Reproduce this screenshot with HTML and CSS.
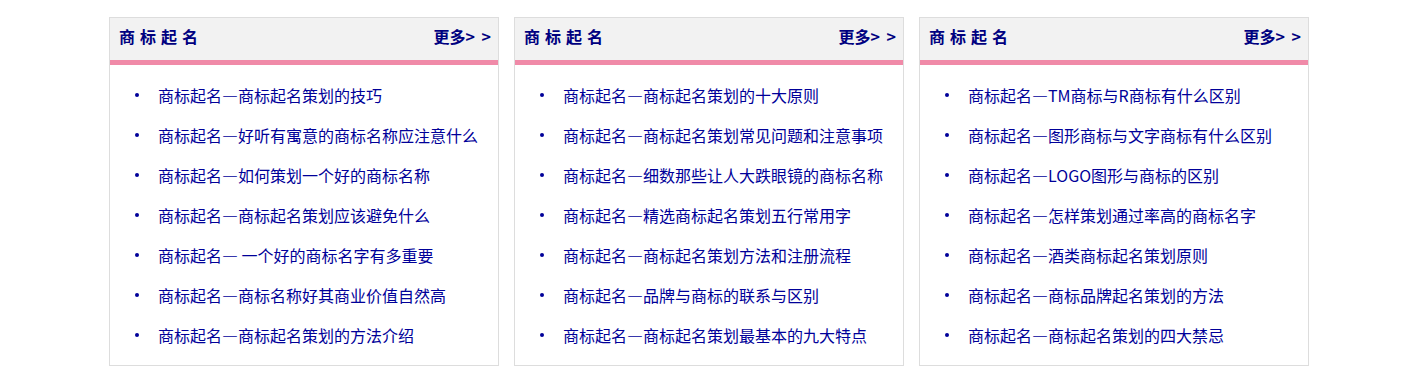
FILE: index.html
```html
<!DOCTYPE html>
<html lang="zh-CN">
  <head>
    <meta charset="UTF-8" />
    <meta name="viewport" content="width=device-width, initial-scale=1.0" />
    <title>商标起名</title>
    <link rel="stylesheet" href="styles.css">
  </head>
  <body>
    <div class="wrap">
      <div class="box">
        <div class="box-head">
          <span class="box-title">商标起名</span>
          <a class="more" href="#">更多&gt; &gt;</a>
        </div>
        <ul class="news">
          <li><a href="#">商标起名<span class="dash">—</span>商标起名策划的技巧</a></li>
          <li><a href="#">商标起名<span class="dash">—</span>好听有寓意的商标名称应注意什么</a></li>
          <li><a href="#">商标起名<span class="dash">—</span>如何策划一个好的商标名称</a></li>
          <li><a href="#">商标起名<span class="dash">—</span>商标起名策划应该避免什么</a></li>
          <li><a href="#">商标起名<span class="dash">—</span> 一个好的商标名字有多重要</a></li>
          <li><a href="#">商标起名<span class="dash">—</span>商标名称好其商业价值自然高</a></li>
          <li><a href="#">商标起名<span class="dash">—</span>商标起名策划的方法介绍</a></li>
        </ul>
      </div>
      <div class="box">
        <div class="box-head">
          <span class="box-title">商标起名</span>
          <a class="more" href="#">更多&gt; &gt;</a>
        </div>
        <ul class="news">
          <li><a href="#">商标起名<span class="dash">—</span>商标起名策划的十大原则</a></li>
          <li><a href="#">商标起名<span class="dash">—</span>商标起名策划常见问题和注意事项</a></li>
          <li><a href="#">商标起名<span class="dash">—</span>细数那些让人大跌眼镜的商标名称</a></li>
          <li><a href="#">商标起名<span class="dash">—</span>精选商标起名策划五行常用字</a></li>
          <li><a href="#">商标起名<span class="dash">—</span>商标起名策划方法和注册流程</a></li>
          <li><a href="#">商标起名<span class="dash">—</span>品牌与商标的联系与区别</a></li>
          <li><a href="#">商标起名<span class="dash">—</span>商标起名策划最基本的九大特点</a></li>
        </ul>
      </div>
      <div class="box">
        <div class="box-head">
          <span class="box-title">商标起名</span>
          <a class="more" href="#">更多&gt; &gt;</a>
        </div>
        <ul class="news">
          <li><a href="#">商标起名<span class="dash">—</span>TM商标与R商标有什么区别</a></li>
          <li><a href="#">商标起名<span class="dash">—</span>图形商标与文字商标有什么区别</a></li>
          <li><a href="#">商标起名<span class="dash">—</span>LOGO图形与商标的区别</a></li>
          <li><a href="#">商标起名<span class="dash">—</span>怎样策划通过率高的商标名字</a></li>
          <li><a href="#">商标起名<span class="dash">—</span>酒类商标起名策划原则</a></li>
          <li><a href="#">商标起名<span class="dash">—</span>商标品牌起名策划的方法</a></li>
          <li><a href="#">商标起名<span class="dash">—</span>商标起名策划的四大禁忌</a></li>
        </ul>
      </div>
    </div>
  </body>
</html>
```

FILE: styles.css
```css
body {
  margin: 0;
  background-color: #ffffff;
  font-family: "Microsoft YaHei", "Noto Sans CJK SC", sans-serif;
}
a {
  text-decoration: none;
}
.wrap {
  width: 1200px;
  padding-right: 4px;
  margin: 17px auto 0;
  display: flex;
  gap: 15px;
}
.box {
  width: 390px;
  height: 349px;
  box-sizing: border-box;
  border: 1px solid #dddddd;
}
.box-head {
  height: 36px;
  padding: 0 7px 6px 9px;
  background-color: #f2f2f2;
  border-bottom: 5px solid #f08aa8;
  display: flex;
  align-items: center;
  justify-content: space-between;
}
.box-title {
  font-size: 16px;
  font-weight: bold;
  letter-spacing: 5px;
  color: #000080;
}
.more {
  font-size: 16px;
  font-weight: bold;
  word-spacing: 3px;
  color: #000080;
}
.news {
  list-style: none;
  margin: 0;
  padding: 10px 0 0 0;
}
.news li {
  height: 40px;
  display: flex;
  align-items: center;
  padding-left: 25px;
}
.news li::before {
  content: "";
  width: 4px;
  height: 4px;
  border-radius: 50%;
  background-color: #000099;
  margin-right: 19px;
}
.news a {
  font-size: 16px;
  color: #000099;
}
.dash {
  font-feature-settings: "fwid";
}
```
